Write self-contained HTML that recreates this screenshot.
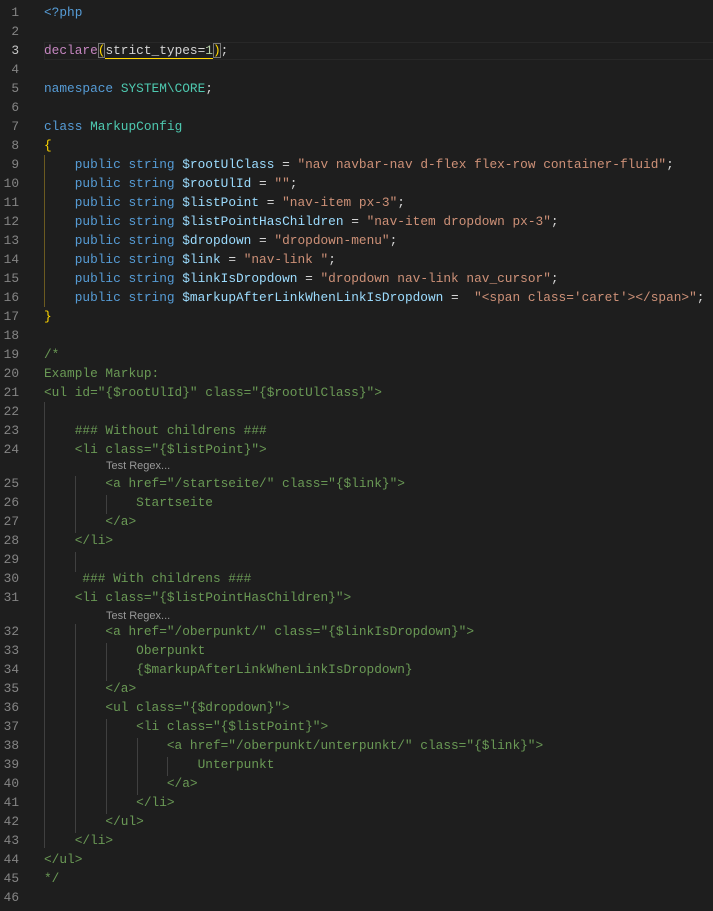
<!DOCTYPE html>
<html><head><meta charset="utf-8"><style>
html,body{margin:0;padding:0;background:#1e1e1e;width:713px;height:911px;overflow:hidden}
.l{position:absolute;left:0;height:19px;width:713px;line-height:19px;font-family:"Liberation Mono",monospace;font-size:12.8px;white-space:pre;color:#d4d4d4}
.n{position:absolute;left:0;width:19px;text-align:right;color:#858585}
.c{position:absolute;left:44px}
.k{color:#569cd6}.t{color:#4ec9b0}.v{color:#9cdcfe}.s{color:#ce9178}.m{color:#6a9955}.p{color:#c586c0}.y{color:#ffd700}.num{color:#b5cea8}
.g{position:absolute;width:1px;background:#404040}
.lens{position:absolute;left:106px;font-family:"Liberation Sans",sans-serif;font-size:11px;color:#999;height:15px;line-height:15px}
</style></head><body>
<div style="position:absolute;left:44px;top:42px;width:669px;height:18px;border:1px solid #282828;border-right:none;box-sizing:border-box"></div>
<!-- guides -->
<div class="g" style="left:44px;top:155px;height:152px;background:#6b5a20"></div>
<div class="g" style="left:44px;top:402px;height:446px"></div>
<div class="g" style="left:75px;top:476px;height:57px"></div>
<div class="g" style="left:75px;top:552px;height:20px"></div>
<div class="g" style="left:75px;top:624px;height:209px"></div>
<div class="g" style="left:106px;top:495px;height:19px"></div>
<div class="g" style="left:106px;top:643px;height:38px"></div>
<div class="g" style="left:106px;top:719px;height:95px"></div>
<div class="g" style="left:137px;top:738px;height:57px"></div>
<div class="g" style="left:167px;top:757px;height:19px"></div>
<div class="lens" style="top:459px">Test Regex...</div>
<div class="lens" style="top:609px">Test Regex...</div>

<div class="l" style="top:3px"><span class="n">1</span><span class="c"><span class="k">&lt;?php</span></span></div>
<div class="l" style="top:22px"><span class="n">2</span></div>
<div class="l" style="top:41px"><span class="n" style="color:#c6c6c6">3</span><span class="c"><span class="p">declare</span><span class="y" style="outline:1px solid #777;outline-offset:-1px">(</span><span style="border-bottom:1px solid #ffd700">strict_types=<span class="num">1</span></span><span class="y" style="outline:1px solid #777;outline-offset:-1px">)</span>;</span></div>
<div class="l" style="top:60px"><span class="n">4</span></div>
<div class="l" style="top:79px"><span class="n">5</span><span class="c"><span class="k">namespace</span> <span class="t">SYSTEM\CORE</span>;</span></div>
<div class="l" style="top:98px"><span class="n">6</span></div>
<div class="l" style="top:117px"><span class="n">7</span><span class="c"><span class="k">class</span> <span class="t">MarkupConfig</span></span></div>
<div class="l" style="top:136px"><span class="n">8</span><span class="c"><span class="y">{</span></span></div>
<div class="l" style="top:155px"><span class="n">9</span><span class="c">    <span class="k">public</span> <span class="k">string</span> <span class="v">$rootUlClass</span> = <span class="s">"nav navbar-nav d-flex flex-row container-fluid"</span>;</span></div>
<div class="l" style="top:174px"><span class="n">10</span><span class="c">    <span class="k">public</span> <span class="k">string</span> <span class="v">$rootUlId</span> = <span class="s">""</span>;</span></div>
<div class="l" style="top:193px"><span class="n">11</span><span class="c">    <span class="k">public</span> <span class="k">string</span> <span class="v">$listPoint</span> = <span class="s">"nav-item px-3"</span>;</span></div>
<div class="l" style="top:212px"><span class="n">12</span><span class="c">    <span class="k">public</span> <span class="k">string</span> <span class="v">$listPointHasChildren</span> = <span class="s">"nav-item dropdown px-3"</span>;</span></div>
<div class="l" style="top:231px"><span class="n">13</span><span class="c">    <span class="k">public</span> <span class="k">string</span> <span class="v">$dropdown</span> = <span class="s">"dropdown-menu"</span>;</span></div>
<div class="l" style="top:250px"><span class="n">14</span><span class="c">    <span class="k">public</span> <span class="k">string</span> <span class="v">$link</span> = <span class="s">"nav-link "</span>;</span></div>
<div class="l" style="top:269px"><span class="n">15</span><span class="c">    <span class="k">public</span> <span class="k">string</span> <span class="v">$linkIsDropdown</span> = <span class="s">"dropdown nav-link nav_cursor"</span>;</span></div>
<div class="l" style="top:288px"><span class="n">16</span><span class="c">    <span class="k">public</span> <span class="k">string</span> <span class="v">$markupAfterLinkWhenLinkIsDropdown</span> =  <span class="s">"&lt;span class='caret'&gt;&lt;/span&gt;"</span>;</span></div>
<div class="l" style="top:307px"><span class="n">17</span><span class="c"><span class="y">}</span></span></div>
<div class="l" style="top:326px"><span class="n">18</span></div>
<div class="l m" style="top:345px"><span class="n">19</span><span class="c">/*</span></div>
<div class="l m" style="top:364px"><span class="n">20</span><span class="c">Example Markup:</span></div>
<div class="l m" style="top:383px"><span class="n">21</span><span class="c">&lt;ul id="{$rootUlId}" class="{$rootUlClass}"&gt;</span></div>
<div class="l m" style="top:402px"><span class="n">22</span></div>
<div class="l m" style="top:421px"><span class="n">23</span><span class="c">    ### Without childrens ###</span></div>
<div class="l m" style="top:440px"><span class="n">24</span><span class="c">    &lt;li class="{$listPoint}"&gt;</span></div>
<div class="l m" style="top:474px"><span class="n">25</span><span class="c">        &lt;a href="/startseite/" class="{$link}"&gt;</span></div>
<div class="l m" style="top:493px"><span class="n">26</span><span class="c">            Startseite</span></div>
<div class="l m" style="top:512px"><span class="n">27</span><span class="c">        &lt;/a&gt;</span></div>
<div class="l m" style="top:531px"><span class="n">28</span><span class="c">    &lt;/li&gt;</span></div>
<div class="l m" style="top:550px"><span class="n">29</span></div>
<div class="l m" style="top:569px"><span class="n">30</span><span class="c">     ### With childrens ###</span></div>
<div class="l m" style="top:588px"><span class="n">31</span><span class="c">    &lt;li class="{$listPointHasChildren}"&gt;</span></div>
<div class="l m" style="top:622px"><span class="n">32</span><span class="c">        &lt;a href="/oberpunkt/" class="{$linkIsDropdown}"&gt;</span></div>
<div class="l m" style="top:641px"><span class="n">33</span><span class="c">            Oberpunkt</span></div>
<div class="l m" style="top:660px"><span class="n">34</span><span class="c">            {$markupAfterLinkWhenLinkIsDropdown}</span></div>
<div class="l m" style="top:679px"><span class="n">35</span><span class="c">        &lt;/a&gt;</span></div>
<div class="l m" style="top:698px"><span class="n">36</span><span class="c">        &lt;ul class="{$dropdown}"&gt;</span></div>
<div class="l m" style="top:717px"><span class="n">37</span><span class="c">            &lt;li class="{$listPoint}"&gt;</span></div>
<div class="l m" style="top:736px"><span class="n">38</span><span class="c">                &lt;a href="/oberpunkt/unterpunkt/" class="{$link}"&gt;</span></div>
<div class="l m" style="top:755px"><span class="n">39</span><span class="c">                    Unterpunkt</span></div>
<div class="l m" style="top:774px"><span class="n">40</span><span class="c">                &lt;/a&gt;</span></div>
<div class="l m" style="top:793px"><span class="n">41</span><span class="c">            &lt;/li&gt;</span></div>
<div class="l m" style="top:812px"><span class="n">42</span><span class="c">        &lt;/ul&gt;</span></div>
<div class="l m" style="top:831px"><span class="n">43</span><span class="c">    &lt;/li&gt;</span></div>
<div class="l m" style="top:850px"><span class="n">44</span><span class="c">&lt;/ul&gt;</span></div>
<div class="l m" style="top:869px"><span class="n">45</span><span class="c">*/</span></div>
<div class="l" style="top:888px"><span class="n">46</span></div>
</body></html>
